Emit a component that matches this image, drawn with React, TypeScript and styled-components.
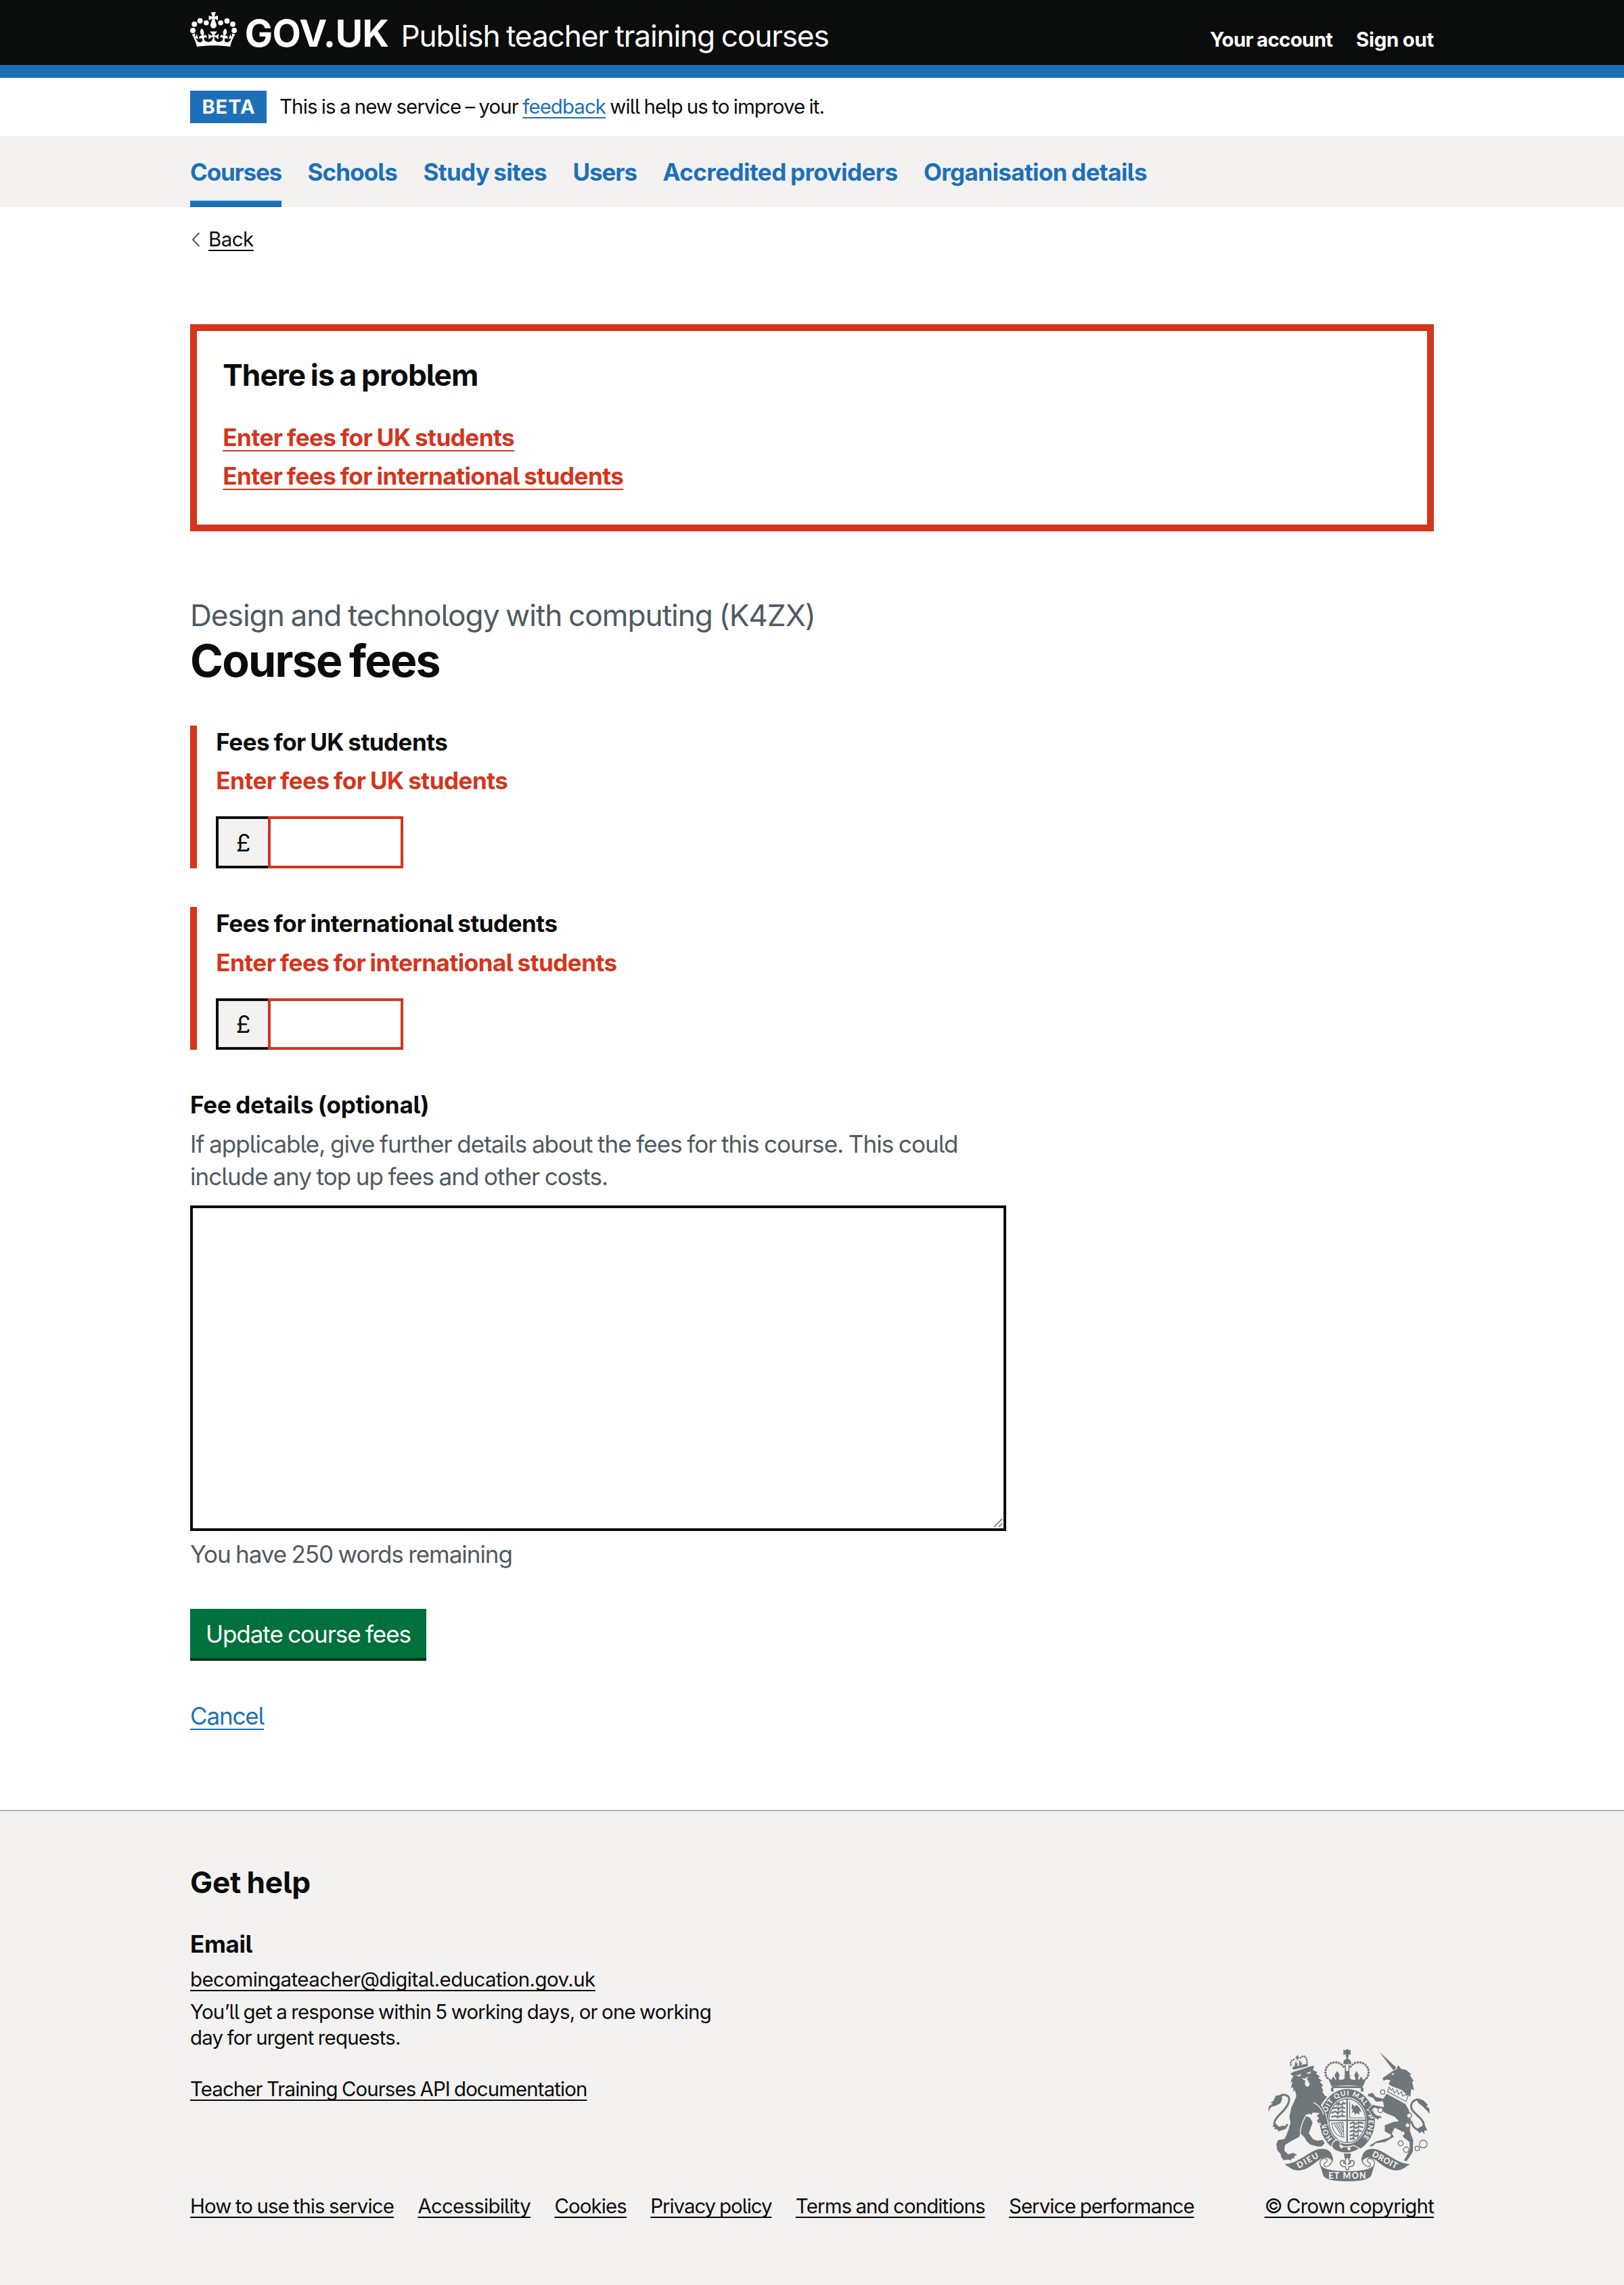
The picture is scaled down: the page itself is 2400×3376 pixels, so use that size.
import React from "react";
import styled, { createGlobalStyle } from "styled-components";

const ink = "#0b0c0c";
const blue = "#1d70b8";
const red = "#d4351c";
const grey = "#505a5f";
const pale = "#f3f2f1";
const crestGrey = "#6f777b";

const GlobalStyle = createGlobalStyle`
  *, *::before, *::after { box-sizing: border-box; }
  body {
    margin: 0;
    background: #fff;
    color: ${ink};
    font-family: Inter, "Liberation Sans", sans-serif;
    font-feature-settings: "cv05";
    word-spacing: -0.04em;
    -webkit-font-smoothing: antialiased;
  }
  h1, h2, h3, p, ul { margin: 0; padding: 0; }
  ul { list-style: none; }
`;

const Container = styled.div`
  width: 1838px;
  margin: 0 auto;
`;

type Size = "s" | "m" | "l" | "xl";
const sizes: Record<Size, [number, number]> = {
  s: [29.4, 38.3],
  m: [35, 48],
  l: [44.2, 58],
  xl: [66.2, 72],
};

const Text = styled.span<{ $size: Size; $bold?: boolean; $track?: number; $color?: string }>`
  font-size: ${(p) => sizes[p.$size][0]}px;
  line-height: ${(p) => sizes[p.$size][1]}px;
  font-weight: ${(p) => (p.$bold ? 700 : 400)};
  letter-spacing: ${(p) => p.$track ?? 0}px;
  word-spacing: -0.04em;
  color: ${(p) => p.$color ?? "inherit"};
  white-space: nowrap;
`;

const Link = styled(Text).attrs({ as: "a", href: "#" })`
  text-decoration: underline;
  text-decoration-thickness: 2px;
  text-underline-offset: ${(p) => (p.$size === "s" ? 5 : 6)}px;
  text-decoration-skip-ink: none;
`;

const PlainLink = styled(Link)`
  text-decoration: none;
`;

const Header = styled.header`
  background: ${ink};
  color: #fff;
  border-bottom: 19px solid ${blue};
`;

const HeaderRow = styled(Container)`
  display: flex;
  align-items: baseline;
  height: 96px;
  padding-top: 18px;
`;

const Crown = styled.svg`
  flex: none;
  width: 69.3px;
  height: 51px;
  margin-bottom: -3px;
  fill: currentColor;
`;

const Wordmark = styled.span`
  margin: 0 17.8px 0 11.4px;
  font-size: 55px;
  line-height: 60px;
  font-weight: 700;
  letter-spacing: -0.4px;
`;

const AccountLinks = styled.nav`
  display: flex;
  gap: 34.5px;
  margin-left: auto;
`;

const PhaseBanner = styled(Container)`
  display: flex;
  align-items: center;
  height: 86px;
`;

const Tag = styled.strong`
  width: 113px;
  margin-right: 19px;
  padding-left: 1px;
  background: ${blue};
  color: #fff;
  font-size: 29px;
  line-height: 48px;
  letter-spacing: 1px;
  text-align: center;
`;

const Navigation = styled.nav`
  background: ${pale};
`;

const NavList = styled(Container).attrs({ as: "ul" })`
  display: flex;
  gap: 38.5px;
  height: 105px;
  list-style: none;
`;

const NavItem = styled.li<{ $current?: boolean }>`
  display: flex;
  align-items: center;
  color: ${blue};
  box-shadow: ${(p) => (p.$current ? `inset 0 -9.6px ${blue}` : "none")};
`;

const BackRow = styled.div`
  display: flex;
  align-items: center;
  gap: 12px;
  padding-top: 29px;
  height: 67.3px;
`;

const Chevron = styled.svg`
  width: 13px;
  height: 22px;
  margin-left: 2px;
`;

const ErrorSummary = styled.section`
  margin-top: 105.7px;
  height: 306.3px;
  padding: 36px 38.3px;
  border: 10px solid ${red};
`;

const SummaryTitle = styled(Text).attrs({ as: "h2" })`
  display: block;
`;

const ErrorList = styled.ul`
  display: grid;
  gap: 9.4px;
  margin-top: 39px;
  justify-items: start;
`;

const Heading = styled.h1`
  display: grid;
  gap: 2.3px;
  margin-top: 94.4px;
  font-weight: inherit;
`;

const ErrorGroup = styled.div`
  display: grid;
  justify-items: start;
  width: 1206px;
  height: 211px;
  margin-top: 57.3px;
  padding-left: 28.3px;
  border-left: 10px solid ${red};
  row-gap: 9.4px;
  grid-template-rows: 48px 48px auto;

  ${Heading} + & {
    margin-top: 60px;
  }
`;

const MoneyField = styled.div`
  display: flex;
  align-self: end;
  height: 76.6px;
`;

const Prefix = styled.span`
  display: grid;
  place-items: center;
  width: 76.6px;
  border: 4px solid ${ink};
  border-right: 0;
  background: ${pale};
  font-size: 35px;
`;

const MoneyInput = styled.input`
  width: 200px;
  padding: 0 10px;
  border: 4px solid ${red};
  border-radius: 0;
  background: #fff;
  font: inherit;
  font-size: 35px;
  outline: none;
`;

const DetailsGroup = styled.div`
  display: grid;
  justify-items: start;
  margin-top: 57px;
`;

const Hint = styled(Text).attrs({ as: "p" })`
  margin-top: 9.6px;
  color: ${grey};
`;

const TextareaWrap = styled.div`
  position: relative;
`;

const DetailsInput = styled.textarea`
  display: block;
  width: 1206px;
  height: 481px;
  margin-top: 19.2px;
  border: 4px solid ${ink};
  border-radius: 0;
  resize: none;
  outline: none;
`;

const Grip = styled.svg`
  position: absolute;
  right: 5px;
  bottom: 5px;
  width: 14px;
  height: 14px;
`;

const SubmitButton = styled.button`
  display: block;
  width: 349px;
  height: 73px;
  margin: 57.5px 0 61.3px;
  padding: 0;
  border: 0;
  background: #00703c;
  box-shadow: 0 3.8px 0 #002d18;
  color: #fff;
  font: inherit;
  font-feature-settings: inherit;
`;

const Footer = styled.footer`
  margin-top: 114.9px;
  padding: 75.4px 0 96.5px;
  border-top: 2px solid #b1b4b6;
  background: ${pale};
`;

const FooterRow = styled(Container)`
  display: flex;
  justify-content: space-between;
  align-items: flex-end;
`;

const FooterHelp = styled.div`
  display: grid;
  justify-items: start;
`;

const Spaced = styled.div<{ $top: number }>`
  display: flex;
  margin-top: ${(p) => p.$top}px;
`;

const FooterLinks = styled.ul`
  display: flex;
  gap: 35.4px;
  margin-top: 134.7px;
`;

const FooterItem = styled.li`
  display: flex;
`;

const Copyright = styled.div`
  display: flex;
  flex-direction: column;
  align-items: center;
  gap: 18px;
`;

const CrestArt = styled.svg`
  width: 240px;
  height: 196.7px;
`;

const GovCrown = () => {
  const half =
    "M16.2 29.2c4.3 0 8.4.3 12.1.8 1.1-4.5 2.4-7 3.7-8.8l-2.5-.9c.2 1.3.3 1.9 0 2.7-.4-.4-.8-1.1-1.1-2.3l-1.2 4c.7-.5 1.3-.8 2-.9-1.1 2.5-2.6 3.1-3.5 3-1.1-.2-1.7-1.2-1.5-2.1.3-1.2 1.5-1.5 2.1-.1 1.1-2.3-.8-3-2-2.3 1.9-1.9 2.1-3.5.6-5.6-2.1 1.6-2.1 3.2-1.2 5.5-1.2-1.4-3.2-.6-2.5 1.6.9-1.4 2.1-.5 1.9.8-.2 1.1-1.7 2.1-3.5 1.9-2.7-.2-2.9-2.1-2.9-3.6.7-.1 1.9.5 2.9 1.9l.4-4.3c-1.1 1.1-2.1 1.4-3.2 1.4.4-1.2 2.1-3 2.1-3H16.1V29.2z";
  return (
    <Crown viewBox="0 0 34.1 25.1">
      <circle cx="1.95" cy="13.3" r="1.95" />
      <circle cx="3.1" cy="8.7" r="1.95" />
      <circle cx="7.2" cy="6.3" r="1.95" />
      <circle cx="11.7" cy="7.7" r="1.85" />
      <circle cx="22.2" cy="7.7" r="1.85" />
      <circle cx="26.8" cy="6.4" r="1.95" />
      <circle cx="31" cy="8.7" r="1.95" />
      <circle cx="32.1" cy="13.3" r="1.95" />
      <g transform="translate(0.8 -4.9)">
        <path d={half} />
        <path d={half} transform="matrix(-1 0 0 1 32.4 0)" />
      </g>
      <path
        transform="translate(0.9 0)"
        d="M17 4.7l2.3 1.2V2.5l-2.3.7-.2-.2.9-3h-3.4l.9 3-.2.2-2.3-.7v3.4L15 4.7l.2.2-1.3 4c-.1.2-.1.4-.1.6 0 1.1.8 2 1.9 2.2h.7c1-.2 1.9-1.1 1.9-2.1 0-.2 0-.4-.1-.6l-1.3-4z"
      />
    </Crown>
  );
};

const lobe = (cx: number, cy: number, r: number, from: number, to: number, n: number) =>
  Array.from({ length: n }, (_, i) => {
    const a = ((from + ((to - from) * i) / (n - 1)) * Math.PI) / 180;
    return [cx + r * Math.cos(a), cy - r * Math.sin(a)];
  });

const lionCrownPearls = [
  [203, 150], [202, 140], [207, 131], [216, 126], [246, 118],
  [254, 112], [263, 112], [270, 119], [274, 129], [275, 139],
];

const chainRings = [
  [610, 270, 10], [600, 350, 11], [728, 374, 11], [690, 497, 11],
  [714, 525, 12], [763, 520, 10], [790, 500, 17],
];

const Crest = () => (
  <CrestArt viewBox="102 78 720 590" fill={crestGrey}>
    {/* garter and shield */}
    <ellipse cx="453" cy="397" rx="104" ry="122" fill="none" stroke={crestGrey} strokeWidth="37" />
    <ellipse cx="453" cy="397" rx="81" ry="97" fill={pale} stroke={crestGrey} strokeWidth="4" />
    <path d="M371 392h165v6H371zM449 300h7v194h-7z" />
    <path fill="none" stroke={crestGrey} strokeWidth="7" d="M404 326l12-6 8 6 14-8 8 4M388 344l18-6 8 8 14-10 16 6M382 362l20-6 8 8 16-10 18 6M382 380l20-4 8 6 16-8 18 4M464 410l16-6 10 8 14-8 22 4M464 428l16-6 10 8 14-8 20 4M464 446l16-6 10 8 14-8 14 4M464 464l16-6 10 8 14-6M464 480l14-6 8 4" />
    <path fill="none" stroke={crestGrey} strokeWidth="4" d="M416 312l-6 72M434 308l-4 74M484 404l-4 78M504 404l-4 70" />
    <path fill="none" stroke={crestGrey} strokeWidth="3.5" d="M464 312v72h62M384 408l50-4 4 66q-46-4-54-62zM394 410l36 56M404 409l28 48M414 408l20 38M424 407l11 24" />
    <path d="M474 322l12 12 8-8 14 14 8 20-10-6 2 16-14-8-4 10-8-14-10 4 6-14-6-4z" />
    <defs>
      <path id="garter" d="M388 478A94 112 0 1 1 518 478" />
    </defs>
    <text fill={pale} fontFamily="Lato, sans-serif" fontWeight="900" fontSize="31" wordSpacing="0">
      <textPath href="#garter" textLength="492" lengthAdjust="spacing">HONI SOIT QUI MAL Y PENSE</textPath>
    </text>
    <path stroke={pale} strokeWidth="4" d="M384 508q8-30 30-26 14 12 6 26 34 10 62-2l26 14q-56 38-116 4z" />
    <circle cx="427" cy="512" r="7" fill={pale} />
    <circle cx="461" cy="521" r="7" fill={pale} />
    {/* lion */}
    <path stroke={pale} strokeWidth="3" d="M199 188L214 179 288 155 306 151 306 166 300 170 327 183 315 187 336 203 325 206 346 222 333 224 348 241 340 246 348 263 344 268 355 285 366 290 348 312 338 328 356 360 364 392 368 408 362 420 354 412 346 422 336 416 333 405 324 410 317 396 327 385 316 376 328 364 300 362 295 372 285 367 268 373 290 384 301 405 292 430 284 452 302 478 322 484 346 480 354 498 340 512 322 513 288 503 270 486 262 470 246 455 240 470 202 490 178 505 176 530 190 544 214 538 234 549 218 556 222 566 208 564 206 575 190 570 172 574 160 560 155 542 142 530 137 500 146 481 175 476 190 440 200 405 195 380 203 340 217 310 226 288 220 263 213 272 212 250 202 254 208 225 199 232 207 207 213 200z" />
    <path fill={pale} d="M222 192q12 8 26-3l-2 10q-12 5-24-7zM270 182q10 6 22-6l-3 11q-10 6-19-5zM250 206l14 5 16-11-6 12 8 12 5 14-8 8-9-2-5-10 2-16-8-3z" />
    <path fill="none" stroke={pale} strokeWidth="4" d="M303 316q32 14 46 54M246 455q-4-30 24-82" />
    <path d="M209 159l68-16 2 12-65 16zM222 137l8-5-5 12 9-4-3 14-12 2zM240 130l8 2-3 8 9-2-5 11-10 2zM225 111l6 1 0-5 6 1-1 5 5 2-3 5-4-1 2 10-5 1-2-9-5 1z" />
    {lionCrownPearls.map(([x, y]) => (
      <circle key={`${x}-${y}`} cx={x} cy={y} r="4.3" />
    ))}
    <path fill="none" stroke={crestGrey} strokeWidth="9" d="M188 412C176 438 148 444 133 422C120 396 150 375 174 348C196 322 204 292 184 285C172 280 156 282 142 298" />
    <path d="M102 357L106 332 124 320 112 318 126 308 136 286 164 284 164 304 156 320 136 330 116 336zM132 405L120 424 136 420 128 436 148 430 146 446 164 436 184 432 172 418 150 424z" />
    {/* unicorn */}
    <path d="M596 92L671 162 658 174z" />
    <path d="M610 208L632 192 656 176 672 168 679 150 692 167 713 171 736 190 730 195 748 220 741 224 749 262 737 256 733 290 718 282 694 260 650 244 636 234 645 218 628 214 614 220z" />
    <path fill={pale} d="M648 190l14-5-5 10z" />
    <path fill={pale} stroke={crestGrey} strokeWidth="3.5" d="M638 248l10 14 6-8 8 20 12-14 6 20 14-12 4 20 14-8 10 10-8 22-82-44z" />
    <path stroke={pale} strokeWidth="3" d="M628 276L712 322 728 350 736 392 732 440 747 485 745 534 732 556 716 578 702 574 716 550 728 524 728 492 700 470 690 442 664 430 652 454 662 468 622 492 580 498 562 513 548 508 582 487 640 470 646 460 618 445 618 416 660 400 680 398 662 380 622 364 598 348 572 340 562 350 582 372 604 376 608 390 596 384 592 394 566 380 545 346 565 325 615 335 610 312 580 314 566 296 542 288 546 276 566 272 580 290 612 298z" />
    <path fill="none" stroke={crestGrey} strokeWidth="9" d="M736 398C750 446 790 450 792 418C796 386 738 364 736 336C734 308 768 288 790 318" />
    <path d="M819 366L816 340 804 336 810 326 790 306 758 298 768 318 788 334 804 350zM760 434L774 454 782 444 796 456 794 440 808 440 796 414z" />
    {chainRings.map(([x, y, r]) => (
      <circle key={`${x}-${y}`} cx={x} cy={y} r={r} fill={pale} stroke={crestGrey} strokeWidth="4" />
    ))}
    <circle cx="720" cy="417" r="8" fill={pale} />
    <circle cx="699" cy="453" r="8" fill={pale} />
    {/* crown */}
    <path d="M382 268q-6-20 12-24h118q18 4 12 24l-12-2q6-14-6-14H398q-12 0-4 14z" />
    <path d="M384 246L366 204 382 216 392 200 402 218 408 180 418 216 436 214 444 204 437 196 469 196 462 204 470 214 488 216 495 180 504 218 514 200 524 216 540 204 522 246Q453 234 384 246z" />
    <path d="M396 196q12-20 12-20t12 20l-12 22zM484 196q10-20 10-20t12 20l-12 22zM442 150h5v40h-5zM458 150h5v40h-5zM443 176h20v34h-20zM436 138a17 15 0 0 1 34 0v8h-34zM449 112h8v20h-8zM436 82l10 4 0-6h14v6l8-4v24l-10-5 2 12h-14l1-12-11 5z" />
    {[...lobe(400, 182, 44, 215, 35, 12), ...lobe(504, 182, 44, 145, -35, 12)].map(([x, y], i) => (
      <circle key={i} cx={x} cy={y} r="5.4" />
    ))}
    {/* motto ribbon */}
    {["", "matrix(-1 0 0 1 906 0)"].map((t) => (
      <g key={t} transform={t}>
        <path d="M175 589C226 590 268 545 316 526C350 514 384 526 388 560L388 578C372 552 344 556 318 578C292 598 262 622 222 616C204 612 190 600 175 589z" />
        <path fill="none" stroke={crestGrey} strokeWidth="4" d="M388 560C390 594 352 612 350 592C350 580 364 584 364 572C360 556 332 566 332 584C332 600 344 606 348 626" />
      </g>
    ))}
    <path d="M332 590C350 616 400 620 453 620C506 620 556 616 574 590L560 638C552 658 510 665 453 665C396 665 354 658 346 638z" />
    <path d="M438 542h32l-4 22h-24z" />
    <path fill={pale} stroke={crestGrey} strokeWidth="4.5" d="M453 556l11 18-5 16 10-6q-4-12 6-12 12 4 8 18-6 12-22 10l-4 14h-8l-4-14q-16 2-22-10-4-14 8-18 10 0 6 12l10 6-5-16z" />
    <g fill={pale} fontFamily="Lato, sans-serif" fontWeight="900" fontSize="37" wordSpacing="0">
      <text x="370" y="655" textLength="166">ET MON</text>
      <text transform="translate(238 609) rotate(-29)" textLength="104">DIEU</text>
      <text transform="translate(560 553) rotate(28)" textLength="122">DROIT</text>
    </g>
  </CrestArt>
);

type MoneyProps = { label: string; error: string; labelTrack: number; errorTrack: number };

const Money = ({ label, error, labelTrack, errorTrack }: MoneyProps) => (
  <ErrorGroup>
    <Text as="label" $size="m" $bold $track={labelTrack}>{label}</Text>
    <Text $size="m" $bold $track={errorTrack} $color={red}>{error}</Text>
    <MoneyField>
      <Prefix>£</Prefix>
      <MoneyInput />
    </MoneyField>
  </ErrorGroup>
);

const navItems: [string, number][] = [
  ["Courses", -1.21],
  ["Schools", -0.88],
  ["Study sites", -0.67],
  ["Users", -1.09],
  ["Accredited providers", -0.56],
  ["Organisation details", -0.63],
];

const footerLinks: [string, number][] = [
  ["How to use this service", -0.81],
  ["Accessibility", -0.74],
  ["Cookies", -0.87],
  ["Privacy policy", -1.04],
  ["Terms and conditions", -0.85],
  ["Service performance", -0.94],
];

export default function App() {
  return (
    <>
      <GlobalStyle />
      <Header>
        <HeaderRow>
          <GovCrown />
          <Wordmark>GOV.UK</Wordmark>
          <Text $size="l" $track={-1.12}>Publish teacher training courses</Text>
          <AccountLinks>
            <PlainLink $size="s" $bold $track={-0.65}>Your account</PlainLink>
            <PlainLink $size="s" $bold $track={-0.24}>Sign out</PlainLink>
          </AccountLinks>
        </HeaderRow>
      </Header>
      <PhaseBanner>
        <Tag>BETA</Tag>
        <Text $size="s" $track={-0.86}>
          This is a new service – your{" "}
          <Link $size="s" $track={-0.9} $color={blue}>feedback</Link> will help us to improve it.
        </Text>
      </PhaseBanner>
      <Navigation>
        <NavList>
          {navItems.map(([label, track], i) => (
            <NavItem key={label} $current={i === 0}>
              <PlainLink $size="m" $bold $track={track}>{label}</PlainLink>
            </NavItem>
          ))}
        </NavList>
      </Navigation>
      <Container as="main">
        <BackRow>
          <Chevron viewBox="0 0 13 22" fill="none" stroke={grey} strokeWidth="2">
            <path d="M11.5 1L2 11l9.5 10" />
          </Chevron>
          <Link $size="s" $track={-0.47}>Back</Link>
        </BackRow>
        <ErrorSummary>
          <SummaryTitle $size="l" $bold $track={-0.95}>There is a problem</SummaryTitle>
          <ErrorList>
            <li><Link $size="m" $bold $track={-0.48} $color={red}>Enter fees for UK students</Link></li>
            <li><Link $size="m" $bold $track={-0.5} $color={red}>Enter fees for international students</Link></li>
          </ErrorList>
        </ErrorSummary>
        <Heading>
          <Text $size="l" $track={-1.02} $color={grey}>Design and technology with computing (K4ZX)</Text>
          <Text $size="xl" $bold $track={-1.74}>Course fees</Text>
        </Heading>
        <Money label="Fees for UK students" error="Enter fees for UK students" labelTrack={-0.51} errorTrack={-0.47} />
        <Money label="Fees for international students" error="Enter fees for international students" labelTrack={-0.49} errorTrack={-0.49} />
        <DetailsGroup>
          <Text as="label" $size="m" $bold $track={-0.2}>Fee details (optional)</Text>
          <Hint $size="m" $track={-0.93}>
            If applicable, give further details about the fees for this course. This could
            <br />
            include any top up fees and other costs.
          </Hint>
          <TextareaWrap>
            <DetailsInput />
            <Grip viewBox="0 0 14 14" stroke={grey} strokeWidth="1.4">
              <path d="M1 13L13 1M8 13l5-5" />
            </Grip>
          </TextareaWrap>
          <Hint $size="m" $track={-1.04}>You have 250 words remaining</Hint>
        </DetailsGroup>
        <SubmitButton>
          <Text $size="m" $track={-1.05}>Update course fees</Text>
        </SubmitButton>
        <Link $size="m" $track={-1.16} $color={blue}>Cancel</Link>
      </Container>
      <Footer>
        <FooterRow>
          <FooterHelp>
            <Text as="h2" $size="l" $bold $track={-0.22}>Get help</Text>
            <Spaced $top={38.4}><Text as="h3" $size="m" $bold $track={-0.37}>Email</Text></Spaced>
            <Spaced $top={10}><Link $size="s" $track={-0.53}>becomingateacher@digital.education.gov.uk</Link></Spaced>
            <Spaced $top={9.2}>
              <Text as="p" $size="s" $track={-0.79}>
                You’ll get a response within 5 working days, or one working
                <br />
                day for urgent requests.
              </Text>
            </Spaced>
            <Spaced $top={38.2}><Link $size="s" $track={-0.89}>Teacher Training Courses API documentation</Link></Spaced>
            <FooterLinks>
              {footerLinks.map(([label, track]) => (
                <FooterItem key={label}><Link $size="s" $track={track}>{label}</Link></FooterItem>
              ))}
            </FooterLinks>
          </FooterHelp>
          <Copyright>
            <Crest />
            <Link $size="s" $track={-0.78}>© Crown copyright</Link>
          </Copyright>
        </FooterRow>
      </Footer>
    </>
  );
}
